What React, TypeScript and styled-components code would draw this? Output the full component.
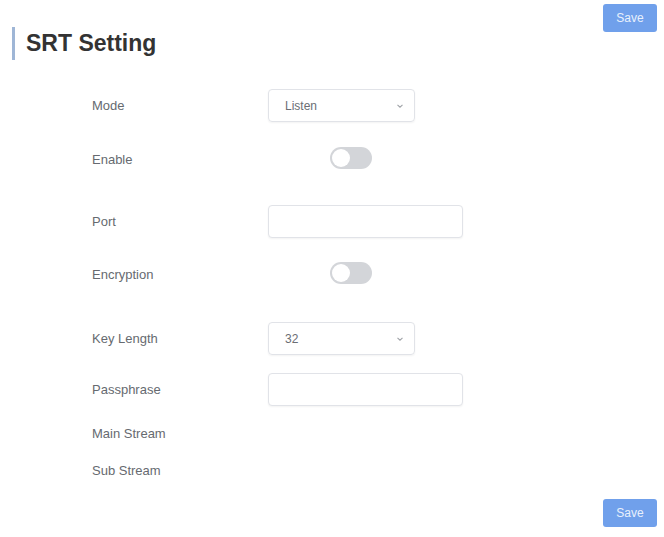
import React, { useState } from 'react';
import styled, { createGlobalStyle } from 'styled-components';

const GlobalStyle = createGlobalStyle`
  html, body {
    margin: 0;
    padding: 0;
    background: #ffffff;
  }
  body {
    font-family: "Liberation Sans", Arial, sans-serif;
    color: #606266;
  }
`;

const Page = styled.div`
  width: 664px;
  height: 537px;
  box-sizing: border-box;
  padding: 0 7px 0 12px;
  display: flex;
  flex-direction: column;
`;

const Header = styled.div`
  display: flex;
  justify-content: space-between;
  align-items: flex-start;
`;

const Title = styled.h2`
  margin: 27px 0 0 0;
  padding-left: 11px;
  border-left: 3px solid #9fb6d6;
  height: 33px;
  line-height: 33px;
  font-size: 23px;
  font-weight: 700;
  color: #333333;
`;

const SaveButton = styled.button<{ $top?: number }>`
  margin-top: ${(p) => p.$top ?? 0}px;
  width: 54px;
  height: 28px;
  border: none;
  border-radius: 3px;
  background: #70a0eb;
  color: #e8f0fc;
  font-family: "Liberation Sans", Arial, sans-serif;
  font-size: 12px;
  cursor: pointer;
`;

const Form = styled.div`
  display: flex;
  flex-direction: column;
  padding-left: 80px;
`;

const Row = styled.div<{ $gap: number }>`
  display: grid;
  grid-template-columns: 176px 1fr;
  align-items: center;
  height: 33px;
  margin-top: ${(p) => p.$gap}px;
`;

const Label = styled.span`
  font-size: 13px;
  color: #666a70;
`;

const SelectBox = styled.div`
  width: 147px;
  height: 33px;
  box-sizing: border-box;
  border: 1px solid #e1e3e8;
  border-radius: 4px;
  box-shadow: 0 1px 2px rgba(0, 0, 0, 0.05);
  display: flex;
  align-items: center;
  padding: 0 10px 0 16px;
  justify-content: space-between;
  font-size: 12px;
  color: #6b6e74;
`;

const TextInput = styled.input`
  width: 195px;
  height: 33px;
  box-sizing: border-box;
  border: 1px solid #e1e3e8;
  border-radius: 4px;
  box-shadow: 0 1px 2px rgba(0, 0, 0, 0.05);
  outline: none;
  padding: 0 12px;
  font-size: 12px;
  color: #606266;
  background: #ffffff;
`;

const Switch = styled.button<{ $on: boolean }>`
  margin-left: 62px;
  width: 42px;
  height: 22px;
  border: none;
  border-radius: 11px;
  padding: 0;
  background: ${(p) => (p.$on ? '#70a0eb' : '#d3d5d9')};
  position: relative;
  cursor: pointer;

  &::after {
    content: '';
    position: absolute;
    top: 2px;
    left: ${(p) => (p.$on ? '22px' : '2px')};
    width: 18px;
    height: 18px;
    border-radius: 50%;
    background: #ffffff;
  }
`;

const Chevron = () => (
  <svg width="8" height="6" viewBox="0 0 8 6" fill="none">
    <path d="M1.5 1.8 L4 4.2 L6.5 1.8" stroke="#a0a3a8" strokeWidth="1.1" />
  </svg>
);

const Footer = styled.div`
  margin-top: auto;
  margin-bottom: 10px;
  display: flex;
  justify-content: flex-end;
`;

export default function App() {
  const [enable, setEnable] = useState(false);
  const [encryption, setEncryption] = useState(false);

  return (
    <>
      <GlobalStyle />
      <Page>
        <Header>
          <Title>SRT Setting</Title>
          <SaveButton $top={4}>Save</SaveButton>
        </Header>
        <Form>
          <Row $gap={29}>
            <Label>Mode</Label>
            <SelectBox>
              <span>Listen</span>
              <Chevron />
            </SelectBox>
          </Row>
          <Row $gap={21}>
            <Label>Enable</Label>
            <div>
              <Switch $on={enable} onClick={() => setEnable(!enable)} />
            </div>
          </Row>
          <Row $gap={29}>
            <Label>Port</Label>
            <TextInput />
          </Row>
          <Row $gap={20}>
            <Label>Encryption</Label>
            <div>
              <Switch $on={encryption} onClick={() => setEncryption(!encryption)} />
            </div>
          </Row>
          <Row $gap={31}>
            <Label>Key Length</Label>
            <SelectBox>
              <span>32</span>
              <Chevron />
            </SelectBox>
          </Row>
          <Row $gap={18}>
            <Label>Passphrase</Label>
            <TextInput />
          </Row>
          <Row $gap={11}>
            <Label>Main Stream</Label>
          </Row>
          <Row $gap={4}>
            <Label>Sub Stream</Label>
          </Row>
        </Form>
        <Footer>
          <SaveButton>Save</SaveButton>
        </Footer>
      </Page>
    </>
  );
}
